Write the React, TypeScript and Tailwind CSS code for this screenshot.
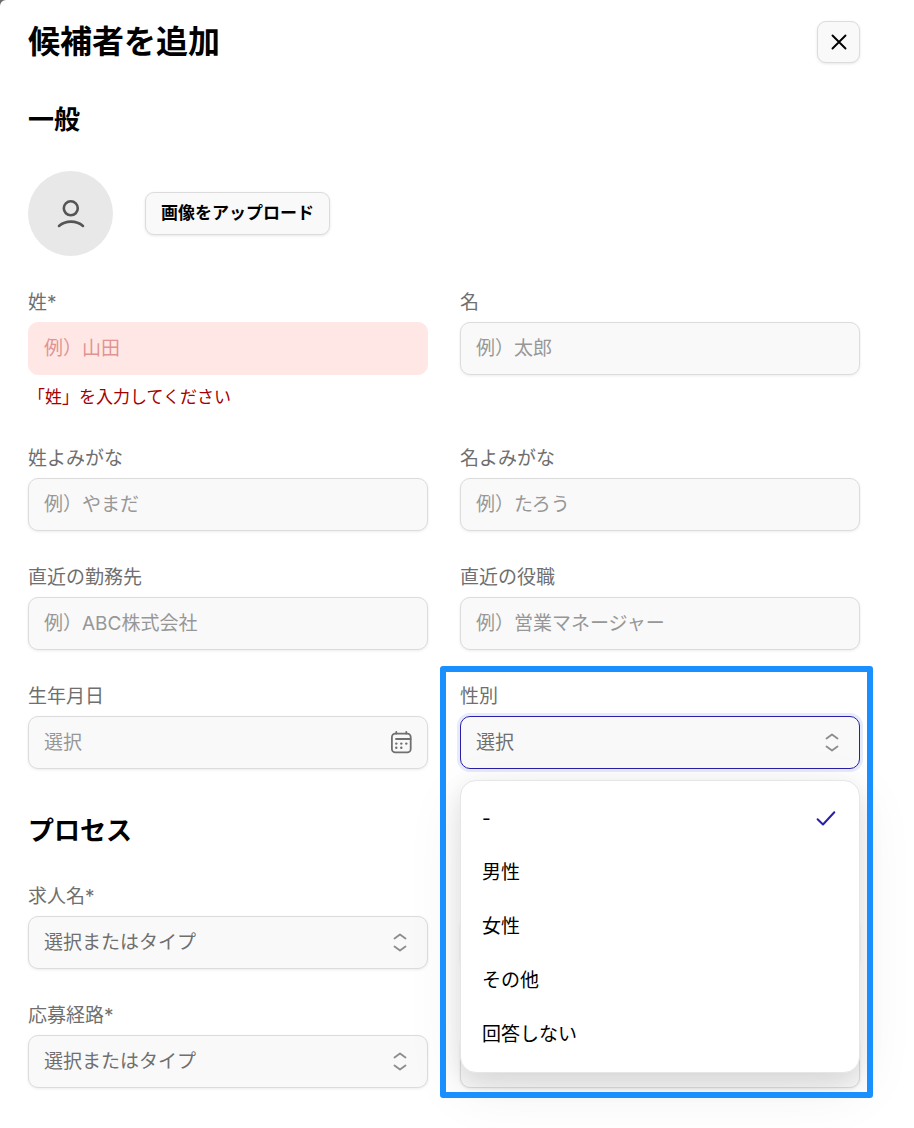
import { useState } from "react";
import type { ReactNode } from "react";

const control =
  "h-[53px] w-full appearance-none rounded-[10px] border px-[15px] text-[19px] leading-7 outline-none";
const neutral =
  "border-[#dcdcdc] bg-[#f9f9f9] text-[#6f6f6f] shadow-[0_1px_3px_rgba(0,0,0,0.08)] placeholder:text-[#979797]";
const invalid =
  "border-[#ffe7e6] bg-[#ffe7e6] text-[#a30000] placeholder:text-[#df9392]";
const focused =
  "border-[#2a1fa8] bg-[#f9f9f9] text-[#6f6f6f] shadow-[0_0_0_3px_#e6ecfb]";

const genders = ["-", "男性", "女性", "その他", "回答しない"];

function Field({
  id,
  label,
  error,
  covered,
  children,
}: {
  id: string;
  label: string;
  error?: string;
  covered?: boolean;
  children: ReactNode;
}) {
  return (
    <div className={`relative flex flex-col ${covered ? "pt-[34px]" : ""}`}>
      {/* label gives way while the open menu lies over it */}
      {!covered && (
        <label
          htmlFor={id}
          className="mb-1 text-[19px] leading-[30px] text-[#6f6f6f]"
        >
          {label}
        </label>
      )}
      {children}
      {error && (
        <p className="mt-2 text-[17px] leading-[29px] text-[#a30000]">
          {error}
        </p>
      )}
    </div>
  );
}

function TextField({
  id,
  label,
  placeholder,
  error,
}: {
  id: string;
  label: string;
  placeholder: string;
  error?: string;
}) {
  return (
    <Field id={id} label={label} error={error}>
      <input
        id={id}
        type="text"
        placeholder={placeholder}
        aria-invalid={Boolean(error)}
        className={`${control} ${error ? invalid : neutral}`}
      />
    </Field>
  );
}

function SelectField({
  id,
  label,
  value,
  active,
  covered,
  children,
}: {
  id: string;
  label: string;
  value: string;
  active?: boolean;
  covered?: boolean;
  children?: ReactNode;
}) {
  return (
    <Field id={id} label={label} covered={covered}>
      <div className="grid items-center">
        <select
          id={id}
          aria-label={covered ? label : undefined}
          className={`col-start-1 row-start-1 ${control} ${active ? focused : neutral}`}
        >
          <option>{value}</option>
        </select>
        <svg
          viewBox="0 0 16 20"
          className="pointer-events-none col-start-1 row-start-1 mr-5 h-5 w-4 justify-self-end"
          fill="none"
          stroke="#8c8c8c"
          strokeWidth="1.8"
          strokeLinecap="round"
          strokeLinejoin="round"
        >
          <path d="M2.500 5.500 8 1.500l5.500 4M2.500 13.500 8 17.500l5.500-4" />
        </svg>
      </div>
      {children}
    </Field>
  );
}

function CalendarIcon() {
  return (
    <svg
      viewBox="0 0 24 24"
      className="pointer-events-none col-start-1 row-start-1 mr-[15px] h-6 w-6 justify-self-end"
      fill="none"
      stroke="#707070"
      strokeWidth="1.8"
      strokeLinecap="round"
    >
      <rect x="2.9" y="2.600" width="18.800" height="18.800" rx="3.4" />
      <path d="M7.300 0.900v1.600M17.300 0.900v1.600M7 8h14.500" />
      <g fill="#707070" stroke="none">
        <circle cx="7.3" cy="12.6" r="1.2" />
        <circle cx="12.3" cy="12.6" r="1.2" />
        <circle cx="17.3" cy="12.6" r="1.2" />
        <circle cx="7.3" cy="16.700" r="1.2" />
        <circle cx="12.3" cy="16.700" r="1.2" />
      </g>
    </svg>
  );
}

function GenderMenu() {
  const [selected, setSelected] = useState("-");

  return (
    <ul className="absolute inset-x-0 top-full z-10 mt-[11px] rounded-2xl border border-[#e6e6e6] bg-white pt-[11px] pb-2.5 shadow-[0_8px_24px_rgba(0,0,0,0.1),0_16px_60px_rgba(0,0,0,0.07)]">
      {genders.map((gender) => (
        <li key={gender}>
          <button
            type="button"
            aria-pressed={gender === selected}
            onClick={() => setSelected(gender)}
            className="flex h-[54px] w-full items-center justify-between pr-[23px] pl-[21px] text-left text-[19px] leading-7 text-black"
          >
            {gender}
            {gender === selected && (
              <svg
                viewBox="0 0 20 20"
                className="h-5 w-5"
                fill="none"
                stroke="#2a1fa8"
                strokeWidth="2"
                strokeLinecap="round"
                strokeLinejoin="round"
              >
                <path d="M1.600 10.300 7 15.500 18.300 3.200" />
              </svg>
            )}
          </button>
        </li>
      ))}
    </ul>
  );
}

export default function App() {
  return (
    <div className="bg-[#6b6b6b] font-['Inter','Noto_Sans_CJK_JP',sans-serif]">
      <main
        lang="ja"
        className="min-h-screen overflow-hidden rounded-tl-md bg-white pt-[21px] pr-[54px] pb-10 pl-7 text-black"
      >
        <header className="flex items-start justify-between">
          <h1 className="text-[32px] leading-[41px] font-bold">候補者を追加</h1>
          <button
            type="button"
            aria-label="閉じる"
            className="flex h-[42px] w-[43px] items-center justify-center rounded-[9px] border border-[#dcdcdc] bg-[#f9f9f9] shadow-[0_1px_3px_rgba(0,0,0,0.1)]"
          >
            <svg
              viewBox="0 0 18 18"
              className="h-[18px] w-[18px]"
              fill="none"
              stroke="#000"
              strokeWidth="1.9"
              strokeLinecap="round"
            >
              <path d="M2.500 2.500l13 13M15.500 2.500l-13 13" />
            </svg>
          </button>
        </header>

        {/* 一般 */}
        <section>
          <h2 className="mt-[41px] mb-[35px] text-[26px] leading-8 font-bold">
            一般
          </h2>
          <div className="mb-8 flex items-center gap-8">
            <div className="flex h-[85px] w-[85px] items-center justify-center rounded-full bg-[#e8e8e8]">
              <svg
                viewBox="0 0 32 32"
                className="h-8 w-8"
                fill="none"
                stroke="#555"
                strokeWidth="2.6"
                strokeLinecap="round"
              >
                <circle cx="15.800" cy="10.300" r="7" />
                <path d="M4 27.900c3.400-2.900 7.500-4.300 12-4.300s8.600 1.400 12 4.300" />
              </svg>
            </div>
            <button
              type="button"
              className="h-[43px] rounded-[9px] border border-[#dcdcdc] bg-[#f9f9f9] px-[15px] pb-0.5 text-[17px] leading-6 font-semibold shadow-[0_1px_3px_rgba(0,0,0,0.1)]"
            >
              画像をアップロード
            </button>
          </div>

          <div className="grid grid-cols-2 gap-8">
            <TextField
              id="last-name"
              label="姓*"
              placeholder="例）山田"
              error="「姓」を入力してください"
            />
            <TextField id="first-name" label="名" placeholder="例）太郎" />
            <TextField
              id="last-kana"
              label="姓よみがな"
              placeholder="例）やまだ"
            />
            <TextField
              id="first-kana"
              label="名よみがな"
              placeholder="例）たろう"
            />
            <TextField
              id="company"
              label="直近の勤務先"
              placeholder="例）ABC株式会社"
            />
            <TextField
              id="position"
              label="直近の役職"
              placeholder="例）営業マネージャー"
            />
            <Field id="birthday" label="生年月日">
              <div className="grid items-center">
                <input
                  id="birthday"
                  type="text"
                  placeholder="選択"
                  className={`col-start-1 row-start-1 ${control} ${neutral}`}
                />
                <CalendarIcon />
              </div>
            </Field>
            <SelectField id="gender" label="性別" value="選択" active>
              <GenderMenu />
              {/* 青い強調枠 */}
              <div className="pointer-events-none absolute -top-4 -right-[13px] -left-5 z-20 h-[432px] rounded-[3px] border-6 border-[#1a90ff]" />
            </SelectField>
          </div>
        </section>

        {/* プロセス */}
        <section>
          <h2 className="mt-[46px] mb-[35px] text-[26px] leading-8 font-bold">
            プロセス
          </h2>
          <div className="grid grid-cols-2 gap-8">
            <SelectField id="job" label="求人名*" value="選択またはタイプ" />
            <SelectField id="step" label="選考ステップ" value="選択" covered />
            <SelectField
              id="channel"
              label="応募経路*"
              value="選択またはタイプ"
            />
            <SelectField id="owner" label="担当者" value="選択" covered />
          </div>
        </section>
      </main>
    </div>
  );
}
